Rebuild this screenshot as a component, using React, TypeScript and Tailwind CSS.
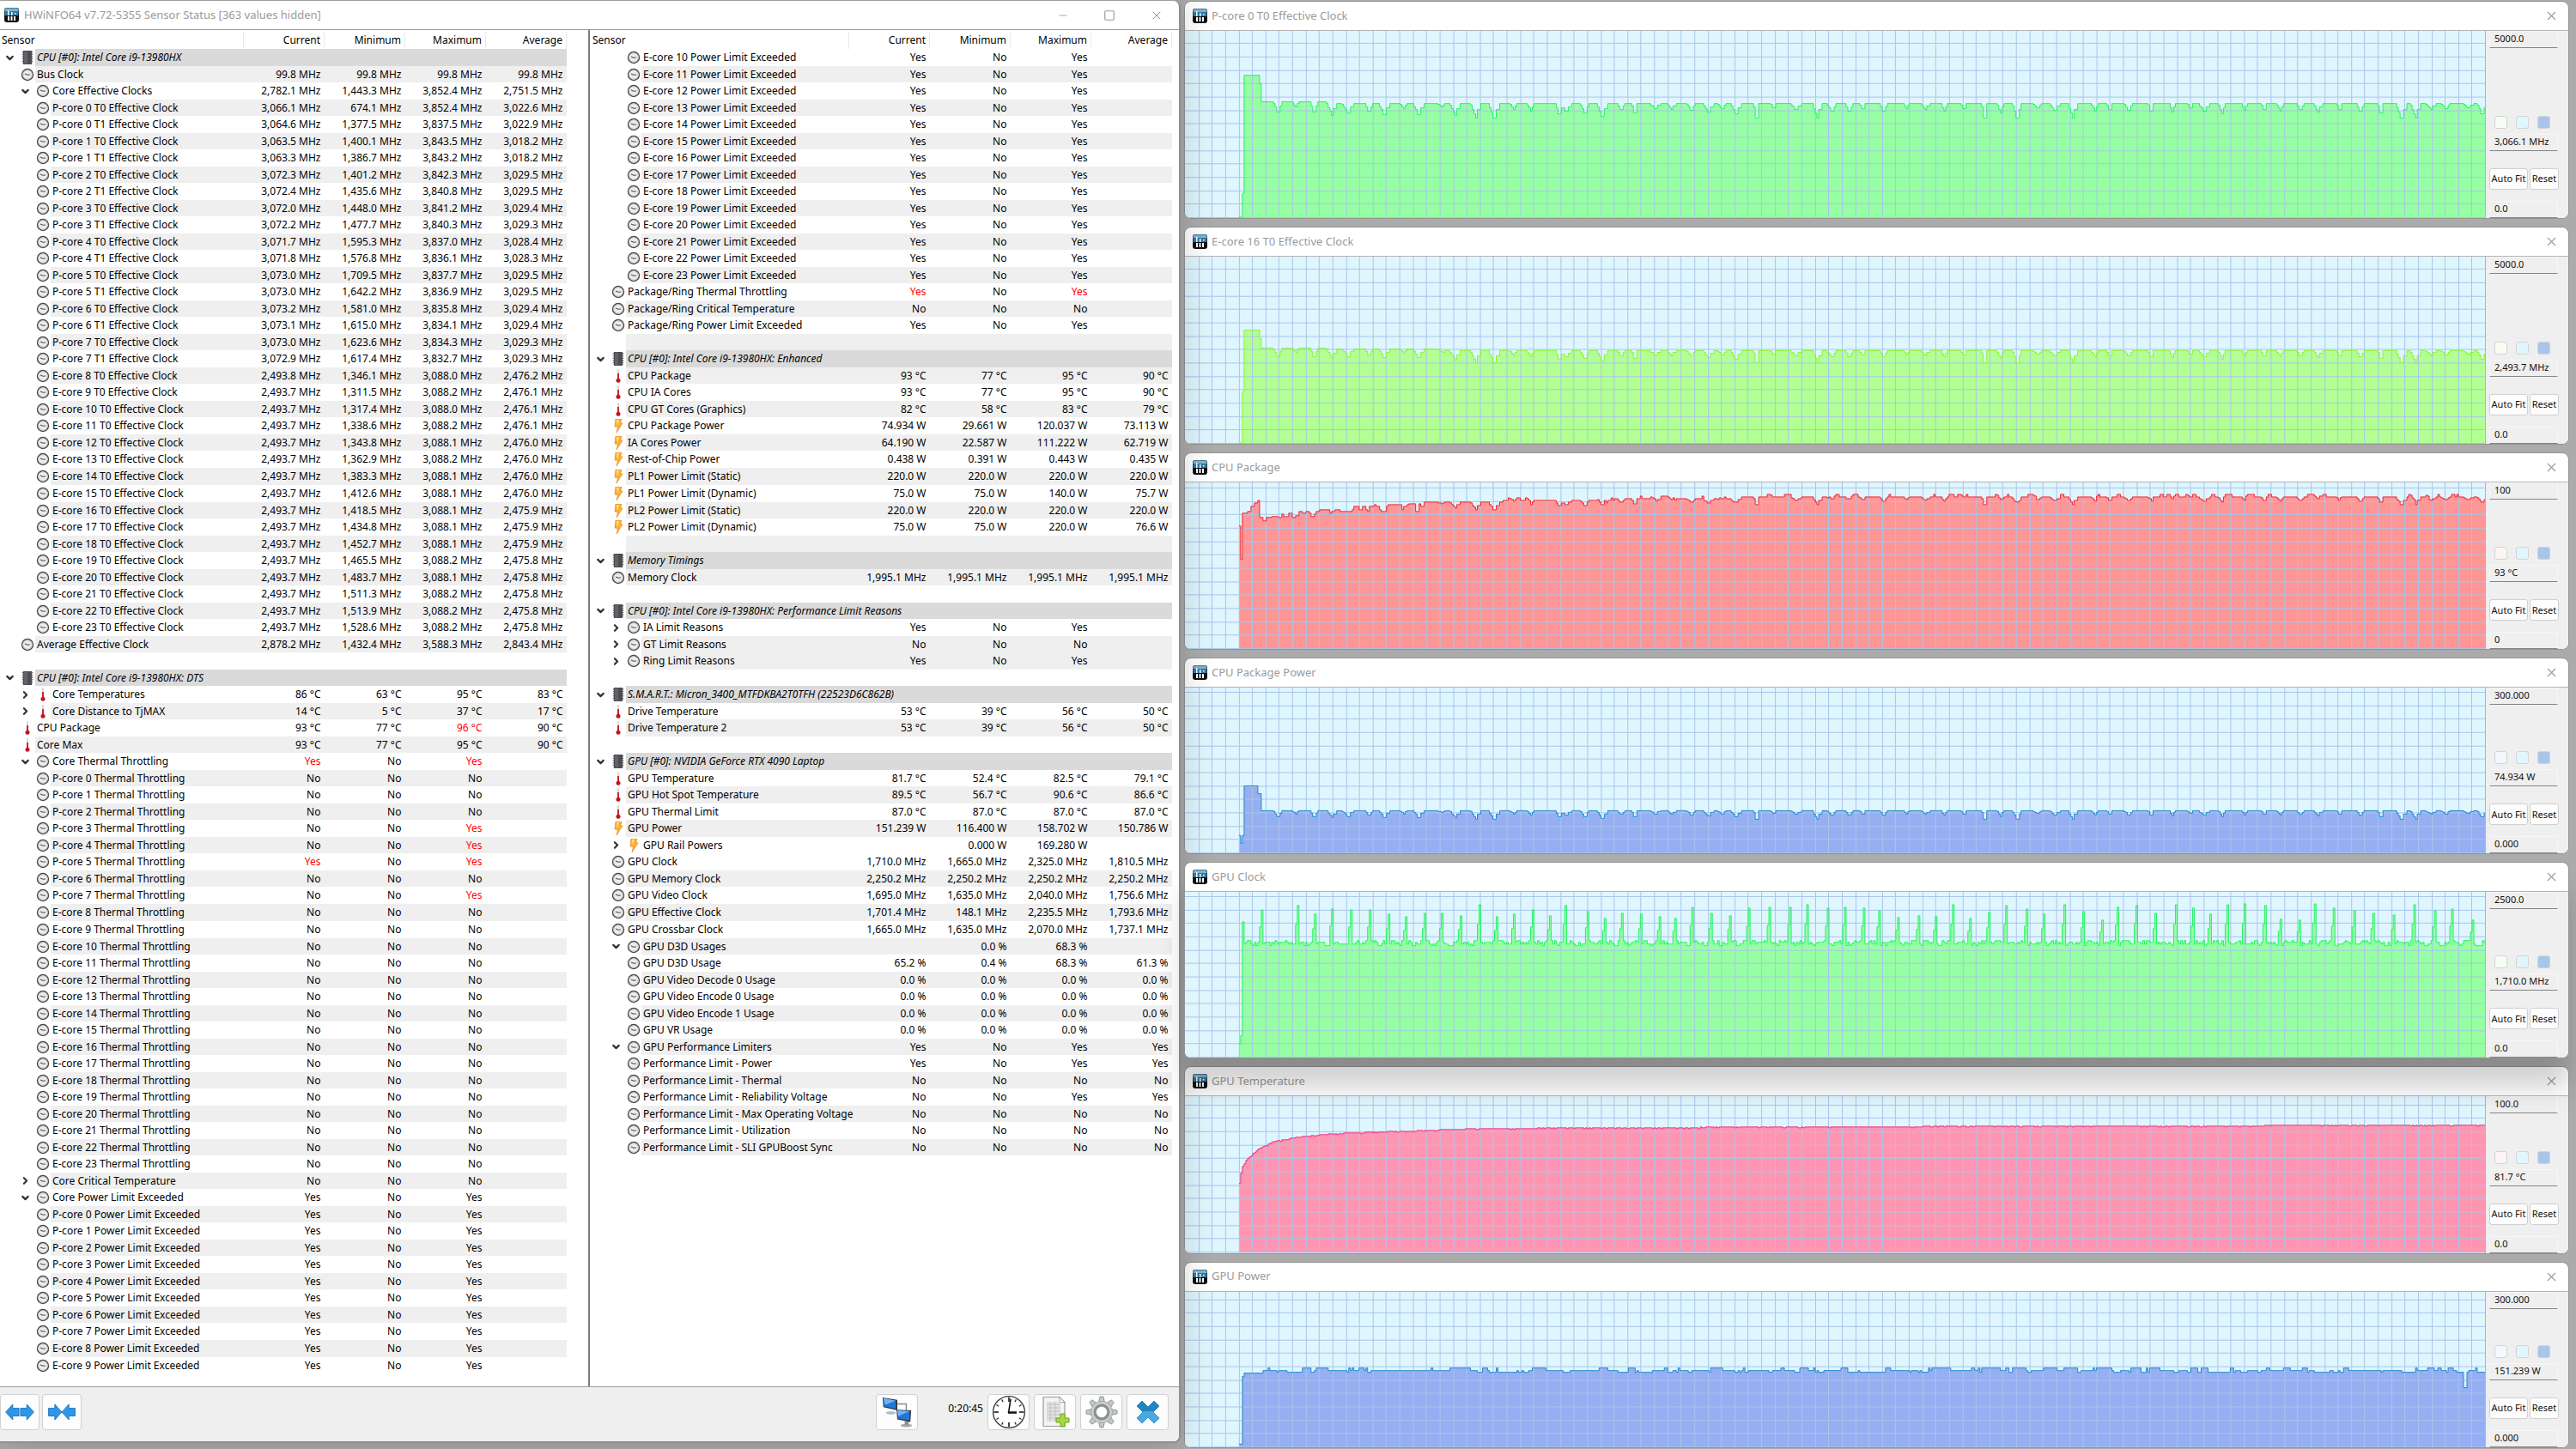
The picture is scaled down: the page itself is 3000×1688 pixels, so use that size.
import { ReactNode } from "react";
import clsx from "clsx";
import { ChevronDown, ChevronRight, Minus, Square, X } from "lucide-react";

type IconName = "clock" | "temp" | "power" | "chip";

type Row = {
  level?: 1 | 2;
  icon?: IconName;
  open?: boolean;
  label?: string;
  values?: string[];
  alert?: number[];
  header?: boolean;
  hidden?: number;
};

/* ---------- row helpers ---------- */

const blank: Row = {};

const group = (label: string): Row => ({ header: true, icon: "chip", open: true, label });

const row = (level: 1 | 2, icon: IconName, label: string, values: string, extra: Partial<Row> = {}): Row => ({
  level,
  icon,
  label,
  values: values.split("|"),
  ...extra,
});

const withUnit = (values: string, unit: string) =>
  values
    .split(" ")
    .map((v) => (v === "-" ? "" : `${v} ${unit}`))
    .join("|");

const coreName = (i: number) => (i < 8 ? `P-core ${i}` : `E-core ${i}`);

const range = (from: number, to: number) => Array.from({ length: to - from + 1 }, (_, i) => from + i);

const pCoreClocks = [
  "3,066.1 674.1 3,852.4 3,022.6",
  "3,064.6 1,377.5 3,837.5 3,022.9",
  "3,063.5 1,400.1 3,843.5 3,018.2",
  "3,063.3 1,386.7 3,843.2 3,018.2",
  "3,072.3 1,401.2 3,842.3 3,029.5",
  "3,072.4 1,435.6 3,840.8 3,029.5",
  "3,072.0 1,448.0 3,841.2 3,029.4",
  "3,072.2 1,477.7 3,840.3 3,029.3",
  "3,071.7 1,595.3 3,837.0 3,028.4",
  "3,071.8 1,576.8 3,836.1 3,028.3",
  "3,073.0 1,709.5 3,837.7 3,029.5",
  "3,073.0 1,642.2 3,836.9 3,029.5",
  "3,073.2 1,581.0 3,835.8 3,029.4",
  "3,073.1 1,615.0 3,834.1 3,029.4",
  "3,073.0 1,623.6 3,834.3 3,029.3",
  "3,072.9 1,617.4 3,832.7 3,029.3",
];

const eCoreClocks = [
  "2,493.8 1,346.1 3,088.0 2,476.2",
  "2,493.7 1,311.5 3,088.2 2,476.1",
  "2,493.7 1,317.4 3,088.0 2,476.1",
  "2,493.7 1,338.6 3,088.2 2,476.1",
  "2,493.7 1,343.8 3,088.1 2,476.0",
  "2,493.7 1,362.9 3,088.2 2,476.0",
  "2,493.7 1,383.3 3,088.1 2,476.0",
  "2,493.7 1,412.6 3,088.1 2,476.0",
  "2,493.7 1,418.5 3,088.1 2,475.9",
  "2,493.7 1,434.8 3,088.1 2,475.9",
  "2,493.7 1,452.7 3,088.1 2,475.9",
  "2,493.7 1,465.5 3,088.2 2,475.8",
  "2,493.7 1,483.7 3,088.1 2,475.8",
  "2,493.7 1,511.3 3,088.2 2,475.8",
  "2,493.7 1,513.9 3,088.2 2,475.8",
  "2,493.7 1,528.6 3,088.2 2,475.8",
];

const throttled: Record<number, number[]> = { 3: [2], 4: [2], 5: [0, 2], 7: [2] };

const leftRows: Row[] = [
  group("CPU [#0]: Intel Core i9-13980HX"),
  row(1, "clock", "Bus Clock", withUnit("99.8 99.8 99.8 99.8", "MHz")),
  row(2, "clock", "Core Effective Clocks", withUnit("2,782.1 1,443.3 3,852.4 2,751.5", "MHz"), { open: true }),
  ...pCoreClocks.map((v, i) =>
    row(2, "clock", `P-core ${Math.floor(i / 2)} T${i % 2} Effective Clock`, withUnit(v, "MHz")),
  ),
  ...eCoreClocks.map((v, i) => row(2, "clock", `E-core ${i + 8} T0 Effective Clock`, withUnit(v, "MHz"))),
  row(1, "clock", "Average Effective Clock", withUnit("2,878.2 1,432.4 3,588.3 2,843.4", "MHz")),
  blank,
  group("CPU [#0]: Intel Core i9-13980HX: DTS"),
  row(2, "temp", "Core Temperatures", withUnit("86 63 95 83", "°C"), { open: false }),
  row(2, "temp", "Core Distance to TjMAX", withUnit("14 5 37 17", "°C"), { open: false }),
  row(1, "temp", "CPU Package", withUnit("93 77 96 90", "°C"), { alert: [2] }),
  row(1, "temp", "Core Max", withUnit("93 77 95 90", "°C")),
  row(2, "clock", "Core Thermal Throttling", "Yes|No|Yes|", { open: true, alert: [0, 2] }),
  ...range(0, 23).map((i) => {
    const alert = throttled[i] ?? [];
    const values = [0, 1, 2].map((c) => (alert.includes(c) ? "Yes" : "No")).join("|");
    return row(2, "clock", `${coreName(i)} Thermal Throttling`, `${values}|`, { alert });
  }),
  row(2, "clock", "Core Critical Temperature", "No|No|No|", { open: false }),
  row(2, "clock", "Core Power Limit Exceeded", "Yes|No|Yes|", { open: true }),
  ...range(0, 9).map((i) => row(2, "clock", `${coreName(i)} Power Limit Exceeded`, "Yes|No|Yes|")),
];

const rightRows: Row[] = [
  ...range(10, 23).map((i) => row(2, "clock", `${coreName(i)} Power Limit Exceeded`, "Yes|No|Yes|")),
  row(1, "clock", "Package/Ring Thermal Throttling", "Yes|No|Yes|", { alert: [0, 2] }),
  row(1, "clock", "Package/Ring Critical Temperature", "No|No|No|"),
  row(1, "clock", "Package/Ring Power Limit Exceeded", "Yes|No|Yes|"),
  blank,
  group("CPU [#0]: Intel Core i9-13980HX: Enhanced"),
  row(1, "temp", "CPU Package", withUnit("93 77 95 90", "°C")),
  row(1, "temp", "CPU IA Cores", withUnit("93 77 95 90", "°C")),
  row(1, "temp", "CPU GT Cores (Graphics)", withUnit("82 58 83 79", "°C")),
  row(1, "power", "CPU Package Power", withUnit("74.934 29.661 120.037 73.113", "W")),
  row(1, "power", "IA Cores Power", withUnit("64.190 22.587 111.222 62.719", "W")),
  row(1, "power", "Rest-of-Chip Power", withUnit("0.438 0.391 0.443 0.435", "W")),
  row(1, "power", "PL1 Power Limit (Static)", withUnit("220.0 220.0 220.0 220.0", "W")),
  row(1, "power", "PL1 Power Limit (Dynamic)", withUnit("75.0 75.0 140.0 75.7", "W")),
  row(1, "power", "PL2 Power Limit (Static)", withUnit("220.0 220.0 220.0 220.0", "W")),
  row(1, "power", "PL2 Power Limit (Dynamic)", withUnit("75.0 75.0 220.0 76.6", "W")),
  blank,
  group("Memory Timings"),
  row(1, "clock", "Memory Clock", withUnit("1,995.1 1,995.1 1,995.1 1,995.1", "MHz")),
  blank,
  group("CPU [#0]: Intel Core i9-13980HX: Performance Limit Reasons"),
  row(2, "clock", "IA Limit Reasons", "Yes|No|Yes|", { open: false }),
  row(2, "clock", "GT Limit Reasons", "No|No|No|", { open: false, hidden: 1 }),
  row(2, "clock", "Ring Limit Reasons", "Yes|No|Yes|", { open: false }),
  blank,
  group("S.M.A.R.T.: Micron_3400_MTFDKBA2T0TFH (22523D6C862B)"),
  row(1, "temp", "Drive Temperature", withUnit("53 39 56 50", "°C")),
  row(1, "temp", "Drive Temperature 2", withUnit("53 39 56 50", "°C")),
  blank,
  group("GPU [#0]: NVIDIA GeForce RTX 4090 Laptop"),
  row(1, "temp", "GPU Temperature", withUnit("81.7 52.4 82.5 79.1", "°C")),
  row(1, "temp", "GPU Hot Spot Temperature", withUnit("89.5 56.7 90.6 86.6", "°C")),
  row(1, "temp", "GPU Thermal Limit", withUnit("87.0 87.0 87.0 87.0", "°C")),
  row(1, "power", "GPU Power", withUnit("151.239 116.400 158.702 150.786", "W")),
  row(2, "power", "GPU Rail Powers", withUnit("- 0.000 169.280 -", "W"), { open: false, hidden: 1 }),
  row(1, "clock", "GPU Clock", withUnit("1,710.0 1,665.0 2,325.0 1,810.5", "MHz")),
  row(1, "clock", "GPU Memory Clock", withUnit("2,250.2 2,250.2 2,250.2 2,250.2", "MHz")),
  row(1, "clock", "GPU Video Clock", withUnit("1,695.0 1,635.0 2,040.0 1,756.6", "MHz")),
  row(1, "clock", "GPU Effective Clock", withUnit("1,701.4 148.1 2,235.5 1,793.6", "MHz")),
  row(1, "clock", "GPU Crossbar Clock", withUnit("1,665.0 1,635.0 2,070.0 1,737.1", "MHz")),
  row(2, "clock", "GPU D3D Usages", withUnit("- 0.0 68.3 -", "%"), { open: true }),
  row(2, "clock", "GPU D3D Usage", withUnit("65.2 0.4 68.3 61.3", "%")),
  row(2, "clock", "GPU Video Decode 0 Usage", withUnit("0.0 0.0 0.0 0.0", "%")),
  row(2, "clock", "GPU Video Encode 0 Usage", withUnit("0.0 0.0 0.0 0.0", "%")),
  row(2, "clock", "GPU Video Encode 1 Usage", withUnit("0.0 0.0 0.0 0.0", "%")),
  row(2, "clock", "GPU VR Usage", withUnit("0.0 0.0 0.0 0.0", "%")),
  row(2, "clock", "GPU Performance Limiters", "Yes|No|Yes|Yes", { open: true }),
  row(2, "clock", "Performance Limit - Power", "Yes|No|Yes|Yes"),
  row(2, "clock", "Performance Limit - Thermal", "No|No|No|No"),
  row(2, "clock", "Performance Limit - Reliability Voltage", "No|No|Yes|Yes"),
  row(2, "clock", "Performance Limit - Max Operating Voltage", "No|No|No|No"),
  row(2, "clock", "Performance Limit - Utilization", "No|No|No|No"),
  row(2, "clock", "Performance Limit - SLI GPUBoost Sync", "No|No|No|No"),
];

/* ---------- icons ---------- */

const AppIcon = () => (
  <svg viewBox="0 0 17 17" className="w-[17px] h-[17px] shrink-0">
    <rect x="0" y="0" width="17" height="17" rx="3" fill="#0b0f14" />
    <path d="M0.5 9V3a2.500 2.500 0 0 1 2.500-2.500h11A2.500 2.500 0 0 1 16.500 3v6z" fill="#2f7ba6" />
    <path d="M0.500 4V3a2.500 2.500 0 0 1 2.500-2.500h11A2.500 2.500 0 0 1 16.500 3v1z" fill="#7fb2cc" />
    <path d="M4 3h1.500v6H4zM8 5h1.500v4H8zM12 6h1.500v1.500H12z" fill="#fff" />
    <path d="M4 10h2v5H4zM7.500 10h2v5h-2zM11 10h2v5h-2z" fill="#fff" />
  </svg>
);

const SensorIcon = ({ name }: { name: IconName }) => {
  if (name === "clock") {
    return (
      <svg viewBox="0 0 16 16" className="w-4 h-4">
        <circle cx="8" cy="8" r="6.500" fill="#ececec" stroke="#4a4a4a" strokeWidth="1.400" />
        <circle cx="8" cy="8" r="5.200" fill="none" stroke="#c4c4c4" strokeWidth="0.800" />
        <path d="M5 7l3 1.300 3-0.300" fill="none" stroke="#5c4a46" strokeWidth="1.100" />
      </svg>
    );
  }
  if (name === "temp") {
    return (
      <svg viewBox="0 0 16 16" className="w-4 h-4">
        <path d="M8 1v6" stroke="#d8d8d8" strokeWidth="2" strokeLinecap="round" />
        <path d="M8 5v7" stroke="#c9252b" strokeWidth="2" />
        <circle cx="8" cy="13.200" r="2.500" fill="#c4141b" />
      </svg>
    );
  }
  if (name === "power") {
    return (
      <svg viewBox="0 0 16 16" className="w-4 h-4">
        <path d="M5 0h7L10.500 4.500 13 5 6 16l1.500-6.500L4 9z" fill="#f9b233" stroke="#e58a1f" strokeWidth="0.700" />
        <path d="M6 1h3L7 8z" fill="#fde08a" />
      </svg>
    );
  }
  return (
    <svg viewBox="0 0 16 16" className="w-4 h-4">
      <path d="M2.500 1v14M13.500 1v14" stroke="#6d6f72" strokeWidth="1.500" strokeDasharray="1.500 1.200" />
      <rect x="3" y="0" width="10" height="16" fill="#4c4e52" />
      <rect x="4" y="1" width="4" height="14" fill="#606367" />
    </svg>
  );
};

const ArrowShape = ({ flip, x }: { flip?: boolean; x: number }) => (
  <path
    d="M0 5h8V0l9 10-9 10v-5H0z"
    transform={flip ? `translate(${x + 17} 0) scale(-1 1)` : `translate(${x} 0)`}
    fill="#2f95e6"
    stroke="#1b78c4"
    strokeWidth="1"
  />
);

const ExpandIcon = () => (
  <svg viewBox="-1 -1 38 22" className="w-[38px] h-[20px] shrink-0">
    <ArrowShape x={0} flip />
    <ArrowShape x={19} />
  </svg>
);

const CollapseIcon = () => (
  <svg viewBox="-1 -1 38 22" className="w-[38px] h-[20px] shrink-0">
    <ArrowShape x={1} />
    <ArrowShape x={18} flip />
  </svg>
);

const NetworkIcon = () => (
  <svg viewBox="0 0 40 38" className="w-[38px] h-[38px]">
    <path d="M19 9h12v9" fill="none" stroke="#8b8f93" strokeWidth="1.500" />
    <ellipse cx="12" cy="20" rx="6" ry="2" fill="#b9bdc1" />
    <path d="M2 1l18 3v13L3 13z" fill="#33383d" />
    <path d="M3 2l15 3v10L4 12z" fill="#2277d8" />
    <path d="M3 2l15 3-13 5z" fill="#6fb4f5" />
    <ellipse cx="31" cy="35.500" rx="7" ry="2" fill="#a7abb0" />
    <path d="M29 30h5v5h-5z" fill="#8b8f93" />
    <path d="M19 16l18 1-1 14-16-3z" fill="#33383d" />
    <path d="M20 17l15 1v11l-14-2z" fill="#2277d8" />
    <path d="M20 17l15 1-14 6z" fill="#6fb4f5" />
  </svg>
);

const ClockFace = () => (
  <svg viewBox="0 0 38 38" className="w-[40px] h-[40px]">
    <circle cx="19" cy="19" r="17.500" fill="#fff" stroke="#3a3a3a" strokeWidth="1.300" />
    {range(0, 11).map((i) => (
      <path
        key={i}
        d={i % 3 === 0 ? "M19 2.500v5" : "M19 3v3"}
        stroke="#222"
        strokeWidth={i % 3 === 0 ? 1.6 : 1.1}
        transform={`rotate(${i * 30} 19 19)`}
      />
    ))}
    <path d="M18.500 20L21 4.500" stroke="#111" strokeWidth="1.500" />
    <path d="M18 19.500h9.500" stroke="#111" strokeWidth="2.400" />
  </svg>
);

const LogIcon = () => (
  <svg viewBox="0 0 38 38" className="w-[38px] h-[38px]">
    <path d="M5 1.500h19l6 6v28H5z" fill="#f3f3f3" stroke="#9b9b9b" strokeWidth="1.200" />
    <path d="M24 1.500l6 6h-6z" fill="#fff" stroke="#9b9b9b" />
    <rect x="9" y="7" width="16" height="23" fill="#e2e2e2" />
    <path d="M9 10h16M9 14h16M9 18h16M9 22h16M9 26h16M13 7v23M19 7v23" stroke="#c2c2c2" strokeWidth="1" />
    <path
      d="M25 21h5v5h5v5h-5v5h-5v-5h-5v-5h5z"
      fill="#a6d940"
      stroke="#6ea31c"
      strokeWidth="1"
      strokeLinejoin="round"
    />
  </svg>
);

const GearIcon = () => (
  <svg viewBox="0 0 38 38" className="w-[38px] h-[38px]">
    {range(0, 7).map((i) => (
      <path
        key={i}
        d="M15.500 8l1.500-7h4l1.500 7z"
        fill="#c3c7c8"
        stroke="#8d9193"
        strokeWidth="0.900"
        transform={`rotate(${i * 45} 19 19)`}
      />
    ))}
    <circle cx="19" cy="19" r="12.500" fill="#cdd0d1" stroke="#9a9ea0" strokeWidth="0.800" />
    <circle cx="19" cy="19" r="8" fill="none" stroke="#8b8f91" strokeWidth="3" />
    <circle cx="19" cy="19" r="6" fill="#fff" />
  </svg>
);

const CloseCross = () => (
  <svg viewBox="0 0 28 28" className="w-[28px] h-[28px]">
    <path d="M7 1l7 7 7-7 6 6-7 7 7 7-6 6-7-7-7 7-6-6 7-7-7-7z" fill="#4aa9de" stroke="#3a95cc" />
    <path d="M7 1l7 7 7-7 6 6-6 6H7L1 7z" fill="#2285bd" />
  </svg>
);

/* ---------- sensor table ---------- */

// Collapsed children still count towards the striping
const stripe = (rows: Row[]) => {
  let n = 0;
  return rows.map((r) => {
    const shaded = n % 2 === 1;
    n += 1 + (r.hidden ?? 0);
    return shaded;
  });
};

const SensorTable = ({ rows }: { rows: Row[] }) => {
  const shades = stripe(rows);
  return (
    <table className="w-full table-fixed border-collapse text-[12px] leading-[18px] text-black whitespace-nowrap">
      <colgroup>
        <col />
        <col className="w-[94px]" />
        <col className="w-[94px]" />
        <col className="w-[94px]" />
        <col className="w-[94px]" />
      </colgroup>
      <thead>
        <tr className="h-[20px]">
          <th className="p-0 pl-[2px] text-left font-normal border-r border-[#e8e8e8]">Sensor</th>
          {["Current", "Minimum", "Maximum", "Average"].map((h) => (
            <th key={h} className="p-0 pr-1 text-right font-normal border-r border-[#e8e8e8]">
              {h}
            </th>
          ))}
        </tr>
      </thead>
      <tbody>
        {rows.map((r, i) => {
          const bg = r.header ? "bg-[#dadada]" : shades[i] ? "bg-[#efefef]" : "bg-white";
          return (
            <tr key={i} className="odd:h-[20px] even:h-[19px] nth-[26n]:h-[20px]">
              <td className="p-0 h-[inherit]">
                <div className="flex h-full items-stretch">
                  {r.level === 2 && <span className="w-[18px] shrink-0" />}
                  <span className="w-[22px] shrink-0 flex items-center justify-center">
                    {r.open === true && <ChevronDown className="w-[13px] h-[13px] text-[#333]" strokeWidth={4} />}
                    {r.open === false && <ChevronRight className="w-[13px] h-[13px] text-[#333]" strokeWidth={4} />}
                  </span>
                  <span className="w-[19px] shrink-0 flex items-center justify-center">
                    {r.icon && <SensorIcon name={r.icon} />}
                  </span>
                  <span className={clsx("grow flex items-center pl-[2px]", bg, r.header && "italic")}>{r.label}</span>
                </div>
              </td>
              {range(0, 3).map((c) => (
                <td key={c} className={clsx("p-0 pr-1 text-right", bg, r.alert?.includes(c) && "text-[#ff0000]")}>
                  {r.values?.[c]}
                </td>
              ))}
            </tr>
          );
        })}
      </tbody>
    </table>
  );
};

const ToolButton = ({ label, wide, children }: { label: string; wide?: boolean; children: ReactNode }) => (
  <button
    aria-label={label}
    className={clsx(
      "h-[42px] flex items-center justify-center bg-[#fdfdfd] border border-[#d0d0d0] rounded-[4px]",
      wide ? "w-[49px]" : "w-[46px]",
    )}
  >
    {children}
  </button>
);

const SensorWindow = () => (
  <section className="relative z-10 flex flex-col bg-white rounded-r-lg border-r-2 border-b-2 border-[#8f8f8f] shadow-[0_0_40px_rgba(0,0,0,0.2)] overflow-hidden">
    <header className="h-[34px] shrink-0 flex items-center pl-[5px] pr-[18px] gap-[6px] border-b border-[#9a9a9a] text-[#9a9a9a]">
      <AppIcon />
      <h1 className="text-[13px] grow">HWiNFO64 v7.72-5355 Sensor Status [363 values hidden]</h1>
      <div className="flex items-center gap-[40px]">
        <button aria-label="Minimize">
          <Minus className="w-[14px] h-[14px]" strokeWidth={1.5} />
        </button>
        <button aria-label="Maximize">
          <Square className="w-[14px] h-[14px]" strokeWidth={2} />
        </button>
        <button aria-label="Close">
          <X className="w-[16px] h-[16px]" strokeWidth={1.5} />
        </button>
      </div>
    </header>

    <div className="grow grid grid-cols-[685fr_688fr] min-h-0 border-b border-[#9a9a9a]">
      <div className="pr-[25px] pt-[2px]">
        <SensorTable rows={leftRows} />
      </div>
      <div className="pl-[1px] pr-[8px] pt-[2px] border-l-2 border-[#7c7c7c]">
        <SensorTable rows={rightRows} />
      </div>
    </div>

    <footer className="h-[63px] shrink-0 flex items-start justify-between bg-[#efefef] pt-2 pr-[12px]">
      <div className="flex gap-[3px]">
        <ToolButton label="Expand all">
          <ExpandIcon />
        </ToolButton>
        <ToolButton label="Collapse all">
          <CollapseIcon />
        </ToolButton>
      </div>
      <div className="flex items-start gap-[5px]">
        <ToolButton label="Remote sensors" wide>
          <NetworkIcon />
        </ToolButton>
        <span className="w-[71px] pt-[8px] text-right text-[12px]">0:20:45</span>
        <ToolButton label="Reset clock" wide>
          <ClockFace />
        </ToolButton>
        <ToolButton label="Start logging" wide>
          <LogIcon />
        </ToolButton>
        <ToolButton label="Settings" wide>
          <GearIcon />
        </ToolButton>
        <ToolButton label="Close sensors" wide>
          <CloseCross />
        </ToolButton>
      </div>
    </footer>
  </section>
);

/* ---------- graphs ---------- */

const WIDTH = 1516;
const STEP = 2;

const makeRandom = (seed: number) => {
  let s = seed;
  return () => {
    s = (s * 1664525 + 1013904223) % 4294967296;
    return s / 4294967296;
  };
};

// Load drops shared by the clock and package power graphs: [x, depth, half width]
const dips: [number, number, number][] = [
  [108, 12, 5], [129, 6, 4], [150, 12, 4], [171, 14, 5], [190, 11, 7], [214, 9, 4], [232, 13, 6], [255, 6, 4],
  [272, 13, 6], [299, 4, 4], [315, 14, 6], [339, 17, 6], [360, 17, 6], [383, 7, 4], [403, 9, 4], [436, 12, 4],
  [444, 9, 6], [466, 11, 5], [486, 15, 6],
];
const dipRandom = makeRandom(11);
for (let x = 508; x < WIDTH; x += 16 + Math.floor(dipRandom() * 12)) {
  const deep = dipRandom() > 0.85;
  dips.push([x, deep ? 17 : 5 + Math.floor(dipRandom() * 8), 3 + Math.floor(dipRandom() * 4)]);
}

const dipAt = (x: number) => {
  let depth = 0;
  for (const [cx, d, w] of dips) {
    const off = x - cx;
    let k = 0;
    if (off >= -1 && off < 2) k = 1;
    else if (off < -1 && off >= -w) k = (off + w + 1) / (w + 1);
    else if (off >= 2 && off < w) k = 0.4;
    depth = Math.max(depth, d * k);
  }
  return Math.round(depth);
};

// Steps through [x, y] knots, holding or easing between them
const interpolate = (knots: [number, number][], x: number, hold: boolean) => {
  let i = 0;
  while (i < knots.length - 1 && knots[i + 1][0] <= x) i++;
  const [x0, y0] = knots[i];
  if (hold || i === knots.length - 1) return y0;
  const [x1, y1] = knots[i + 1];
  return y0 + ((y1 - y0) * (x - x0)) / (x1 - x0);
};

const sample = (from: number, fn: (x: number) => number): [number, number][] => {
  const out: [number, number][] = [];
  for (let x = from; x < WIDTH; x += STEP) out.push([x, fn(x)]);
  return out;
};

const withDips = (start: [number, number][], base: (x: number) => number, scale: number) =>
  sample(63, (x) => (x < 88 ? interpolate(start, x, true) : base(x) + Math.round(dipAt(x) * scale)));

const pCoreData = withDips([[63, 218], [67, 190], [69, 52], [86, 62]], (x) => (x < 165 ? 83 : 85), 1);
const eCoreData = withDips([[63, 218], [67, 158], [69, 86], [86, 96]], (x) => (x < 165 ? 107 : x < 300 ? 108 : 110), 0.8);
const cpuPowerData = withDips([[63, 173], [65, 182], [67, 173], [69, 115], [85, 124]], () => 144, 0.6);

const packageKnots: [number, number][] = [
  [63, 51], [65, 90], [67, 36], [73, 34], [77, 28], [81, 24], [84, 21], [86, 41], [90, 45], [94, 41], [101, 40],
  [109, 41], [112, 37], [114, 40], [121, 36], [125, 41], [129, 39], [133, 34], [137, 36], [141, 34], [145, 36],
  [147, 40], [150, 37], [153, 34], [156, 32], [168, 36], [171, 34], [175, 32], [181, 34], [194, 32], [197, 28],
  [203, 32], [206, 28], [210, 32], [213, 34], [215, 28], [220, 26], [223, 28], [226, 32], [229, 34], [234, 28],
  [237, 26], [252, 32], [255, 28], [258, 26], [261, 25], [268, 34], [273, 25], [275, 28], [278, 23],
];
const packageRandom = makeRandom(5);
let packageJitter = 0;
const packageData = sample(63, (x) => {
  if (x < 278) return interpolate(packageKnots, x, true);
  const base = x < 370 ? 23 : x < 500 ? 21 : x < 640 ? 19 : 17;
  if (packageRandom() > 0.6) packageJitter = packageRandom() > 0.75 ? 3 : 0;
  return base + Math.round(dipAt(x) * 0.5) - packageJitter;
});

const spikes: [number, number][] = [
  [89, 21], [131, 16], [152, 26], [171, 20], [194, 21], [215, 21], [237, 26], [258, 29], [279, 25], [299, 25],
  [321, 28], [343, 15], [363, 29], [384, 26], [405, 21], [426, 28], [443, 16], [469, 23], [490, 31], [509, 25],
  [532, 26], [553, 29], [572, 31],
];
const gpuRandom = makeRandom(23);
for (let x = 592; x < WIDTH - 6; x += 19 + Math.floor(gpuRandom() * 6)) {
  spikes.push([x, 14 + Math.floor(gpuRandom() * 20)]);
}
const gpuClockData = sample(63, (x) => {
  if (x < 65) return 178;
  if (x < 67) return 168;
  if (x < 69) return 35;
  const spike = spikes.find(([sx]) => x >= sx - 3 && x < sx + 1);
  if (spike) return x >= spike[0] - 1 ? spike[1] : Math.round((spike[1] + 60) / 2);
  return 57 + Math.floor(gpuRandom() * 3) * 2 + (x % 21 > 12 ? 2 : 0);
});

const tempKnots: [number, number][] = [
  [63, 102], [66, 84], [70, 76], [78, 68], [88, 60], [104, 53], [130, 48], [170, 44], [250, 41], [340, 38],
  [480, 37], [720, 36], [1000, 35], [1516, 34],
];
const tempRandom = makeRandom(8);
const gpuTempData = sample(63, (x) =>
  Math.round(interpolate(tempKnots, x, false) + (tempRandom() > 0.85 ? 1 : 0)),
);

const gpuPowerRandom = makeRandom(31);
let gpuPowerLevel = 92;
const gpuPowerData = sample(63, (x) => {
  if (x < 67) return 178;
  if (x < 69) return 99;
  if (x < 90) return 95;
  if (x >= 1491 && x < 1495) return 112;
  if (gpuPowerRandom() > 0.65) gpuPowerLevel = [89, 92, 92, 94][Math.floor(gpuPowerRandom() * 4)];
  return gpuPowerLevel;
});

type Graph = {
  title: string;
  size: string;
  height: number;
  max: string;
  value: string;
  min: string;
  fill: string;
  line: string;
  swatch: string;
  data: [number, number][];
};

const graphs: Graph[] = [
  { title: "P-core 0 T0 Effective Clock", size: "flex-[254]", height: 219, max: "5000.0", value: "3,066.1 MHz", min: "0.0", fill: "#96ffa3", line: "#20f460", swatch: "bg-[#f5fdf5]", data: pCoreData },
  { title: "E-core 16 T0 Effective Clock", size: "flex-[254]", height: 219, max: "5000.0", value: "2,493.7 MHz", min: "0.0", fill: "#b2ff94", line: "#8af52c", swatch: "bg-[#f7fdf3]", data: eCoreData },
  { title: "CPU Package", size: "flex-[230]", height: 195, max: "100", value: "93 °C", min: "0", fill: "#ff9696", line: "#f5222c", swatch: "bg-[#fdf4f4]", data: packageData },
  { title: "CPU Package Power", size: "flex-[229]", height: 194, max: "300.000", value: "74.934 W", min: "0.000", fill: "#96aff2", line: "#1e88cc", swatch: "bg-[#f3f7fc]", data: cpuPowerData },
  { title: "GPU Clock", size: "flex-[229] relative z-10 shadow-[0_34px_30px_rgba(0,0,0,0.18)]", height: 194, max: "2500.0", value: "1,710.0 MHz", min: "0.0", fill: "#96ffa3", line: "#20f460", swatch: "bg-[#f5fdf5]", data: gpuClockData },
  { title: "GPU Temperature", size: "flex-[218]", height: 183, max: "100.0", value: "81.7 °C", min: "0.0", fill: "#ff96b1", line: "#f22a86", swatch: "bg-[#fdf2f7]", data: gpuTempData },
  { title: "GPU Power", size: "flex-[217]", height: 182, max: "300.000", value: "151.239 W", min: "0.000", fill: "#96aff2", line: "#1e88cc", swatch: "bg-[#f3f8fc]", data: gpuPowerData },
];

const Plot = ({ graph }: { graph: Graph }) => {
  const { data, height, fill, line } = graph;
  const steps = data.map(([x, y], i) => (i === 0 ? `M${x} ${y}` : `V${y}`) + `H${Math.min(x + STEP, WIDTH)}`).join("");
  const cols = range(1, 96).map((i) => `M${Math.round(i * 15.63)}.5 0V${height}`);
  const rows = range(0, 13)
    .map((i) => height - 1 - Math.round(i * 15.67))
    .filter((y) => y > 0)
    .map((y) => `M0 ${y}.5H${WIDTH}`);
  return (
    <svg
      viewBox={`0 0 ${WIDTH} ${height}`}
      preserveAspectRatio="none"
      className="absolute inset-0 w-full h-full bg-[#dff6fe]"
    >
      <path d={`${steps}V${height}H${data[0][0]}Z`} fill={fill} />
      <path d={cols.join("") + rows.join("")} stroke="#a9c5ea" strokeWidth="1" fill="none" />
      <path d={steps} stroke={line} strokeWidth="1" fill="none" />
    </svg>
  );
};

const GraphWindow = ({ graph }: { graph: Graph }) => {
  const field = "block w-[80px] h-[20px] pl-[5px] pb-[3px] bg-[#efefef] border border-[#f6f6f6] border-b-[#858585]";
  return (
    <section
      className={clsx("min-h-0 flex flex-col bg-white border border-[#939393] rounded-lg overflow-hidden", graph.size)}
    >
      <header className="h-[33px] shrink-0 flex items-center gap-[5px] pl-[9px] pr-[11px] text-[#9a9a9a]">
        <AppIcon />
        <h2 className="text-[13px] grow">{graph.title}</h2>
        <button aria-label={`Close ${graph.title}`}>
          <X className="w-[17px] h-[17px]" strokeWidth={1.5} />
        </button>
      </header>
      <div className="grow flex min-h-0 border-t border-[#b4b4b4] bg-[#efefef]">
        <div className="relative grow border-r border-[#b4b4b4]">
          <Plot graph={graph} />
        </div>
        <div className="w-[96px] shrink-0 flex flex-col pl-[4px] text-[11px] leading-[16px] text-[#111]">
          <input aria-label={`${graph.title} maximum`} className={field} defaultValue={graph.max} />
          <div className="grow" />
          <div className="flex gap-[10px] pl-[6px] mb-[6px]">
            <button aria-label="Line colour" className={clsx("size-[15px] rounded-[3px] border border-[#d3d3d3]", graph.swatch)} />
            <button aria-label="Background colour" className="size-[15px] rounded-[3px] border border-[#d3d3d3] bg-[#dff6fe]" />
            <button aria-label="Grid colour" className="size-[15px] rounded-[3px] border border-[#d3d3d3] bg-[#a9c5ea]" />
          </div>
          <input aria-label={`${graph.title} value`} className={field} defaultValue={graph.value} readOnly />
          <div className="flex gap-[2px] mt-[20px] mb-[13px]">
            <button className="w-[45px] h-[25px] bg-[#fdfdfd] border border-[#d0d0d0] rounded-[3px]">Auto Fit</button>
            <button className="w-[34px] h-[25px] bg-[#fdfdfd] border border-[#d0d0d0] rounded-[3px]">Reset</button>
          </div>
          <input aria-label={`${graph.title} minimum`} className={field} defaultValue={graph.min} />
        </div>
      </div>
    </section>
  );
};

export default function App() {
  return (
    <main className="h-screen grid grid-cols-[1375fr_1613fr] gap-1 pt-[1px] pr-2 bg-[#ababab] font-['Noto_Sans',sans-serif] overflow-hidden">
      <div className="flex flex-col pb-[7px] [&>section]:grow min-h-0">
        <SensorWindow />
      </div>
      <div className="flex flex-col gap-[9px] pb-[1px] min-h-0">
        {graphs.map((g) => (
          <GraphWindow key={g.title} graph={g} />
        ))}
      </div>
    </main>
  );
}
